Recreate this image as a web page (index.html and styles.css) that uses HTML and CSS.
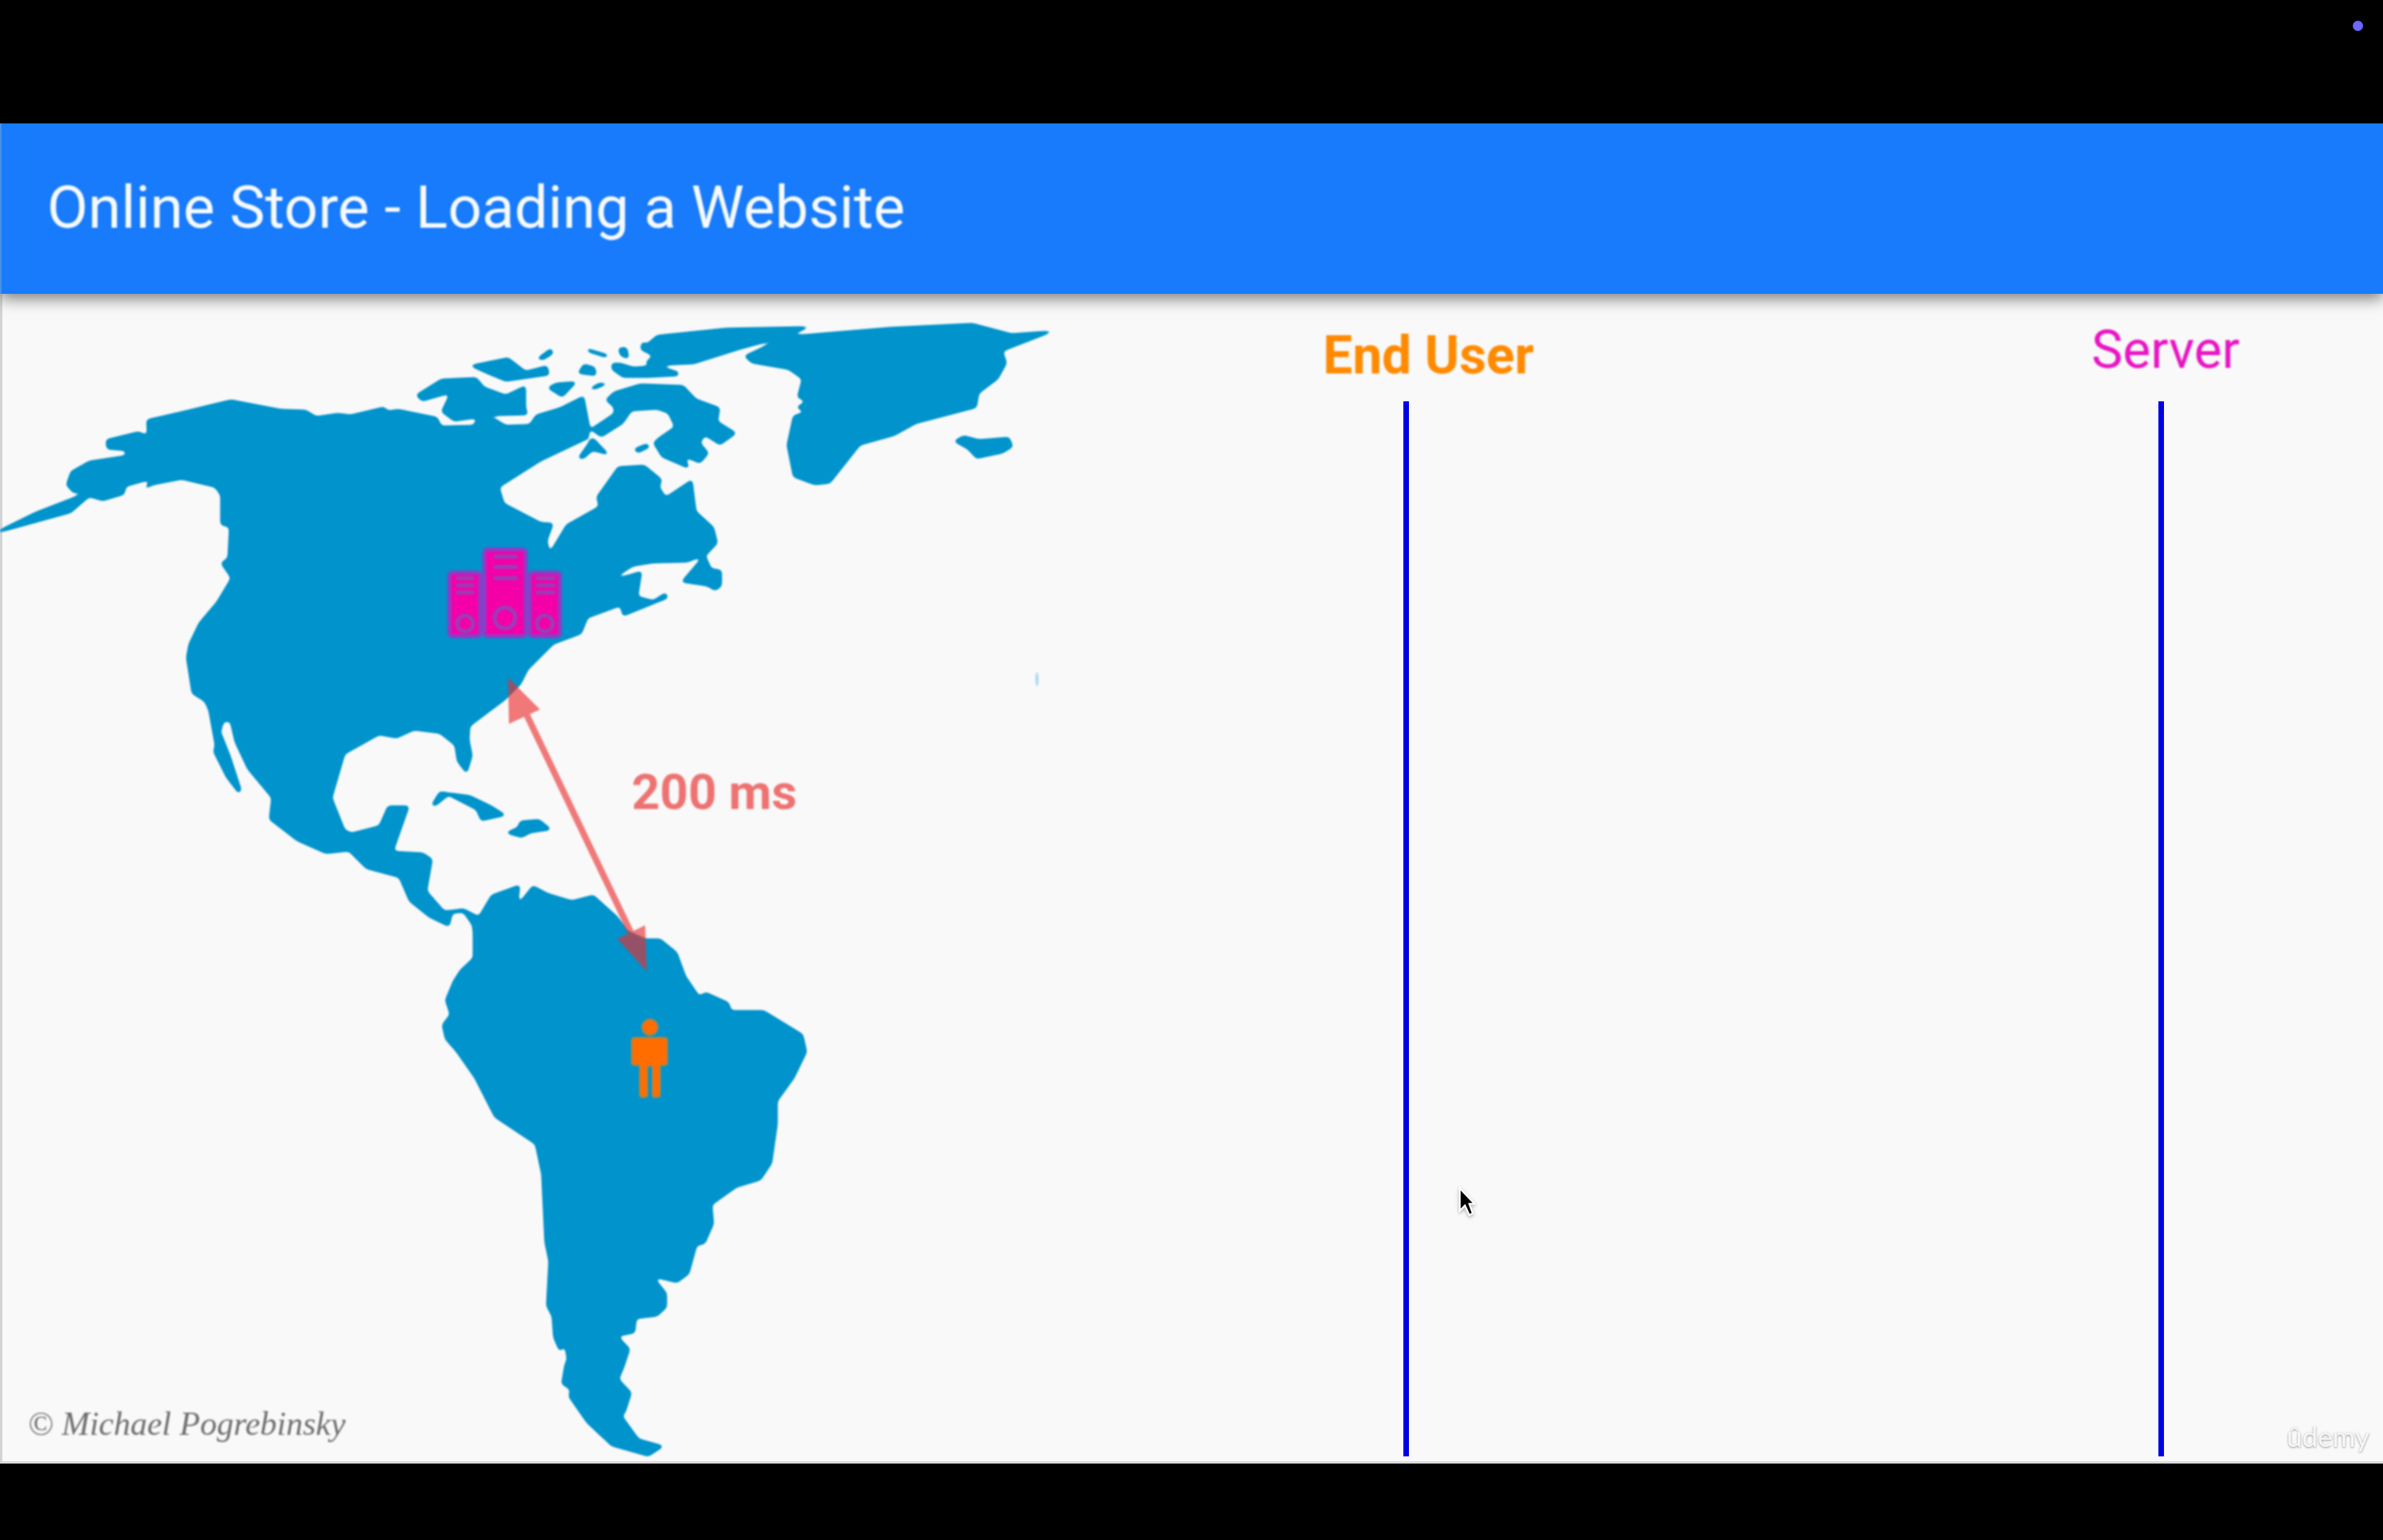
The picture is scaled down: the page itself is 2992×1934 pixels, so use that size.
FILE: index.html
```html
<!DOCTYPE html>
<html lang="en">
<head>
<meta charset="utf-8">
<title>Online Store - Loading a Website</title>
<link rel="stylesheet" href="styles.css">
</head>
<body>
<div class="video">
  <div class="topbar"><span class="dot"></span></div>
  <header class="header"><h1 class="title">Online Store - Loading a Website</h1></header>
  <main class="slide">
    <div class="mapcol">
      <svg class="map" viewBox="0 370 1400 1465" xmlns="http://www.w3.org/2000/svg" aria-label="Map of the Americas">
        <defs>
          <filter id="soften" filterUnits="userSpaceOnUse" x="0" y="370" width="1400" height="1465" color-interpolation-filters="sRGB">
            <feGaussianBlur stdDeviation="2.4"/>
            <feComponentTransfer>
              <feFuncA type="linear" slope="7" intercept="-2.4"/>
            </feComponentTransfer>
          </filter>
        </defs>
        <g class="land" filter="url(#soften)">
          <path d="M-16 674L45 644 112 618 92 620 83 610 89 593 112 580 158 573 158 567 134 565 133 553 174 543 185 548 184 528 232 517 290 503 353 515 384 516 397 524 424 520 440 522 482 512 487 517 500 515 549 525 554 536 595 535 598 528 622 527 635 535 665 534 673 522 703 513 733 498 741 540 738 552 679 580 627 613 633 633 679 657 695 658 687 680 690 695 711 660 752 637 749 625 776 587 809 585 831 603 828 613 836 625 869 603 874 643 896 663 901 683 888 697 863 707 820 708 795 712 766 730 806 718 801 750 820 755 836 745 839 752 782 775 779 762 738 777 730 797 695 810 663 842 654 860 634 880 590 913 589 930 593 950 586 973 574 957 571 937 552 922 520 918 498 928 476 924 433 948 417 1003 433 1043 441 1047 476 1038 487 1013 514 1013 494 1070 531 1072 543 1080 536 1120 558 1145 582 1142 601 1152 617 1125 653 1112 650 1137 669 1113 688 1123 718 1132 745 1125 775 1152 788 1170 810 1180 829 1180 850 1197 861 1227 878 1252 886 1247 915 1260 918 1270 959 1270 1008 1300 1013 1322 997 1355 976 1384 976 1413 969 1462 955 1483 925 1492 894 1514 896 1538 885 1563 875 1565 865 1601 850 1612 821 1605 837 1625 837 1643 825 1654 799 1657 797 1675 776 1679 791 1695 783 1719 777 1733 793 1750 785 1775 781 1779 802 1808 834 1817 814 1830 768 1817 737 1788 714 1755 716 1746 705 1739 709 1715 712 1708 709 1690 703 1699 695 1681 693 1654 686 1641 689 1585 684 1561 680 1476 672 1438 621 1404 596 1355 573 1322 559 1306 555 1288 565 1275 559 1257 569 1233 578 1219 594 1204 594 1172 593 1163 582 1147 568 1148 564 1165 539 1153 514 1133 501 1103 460 1092 438 1070 409 1073 373 1057 338 1030 341 1003 311 967 295 933 289 907 281 907 277 920 289 950 303 993 300 998 284 977 268 945 270 937 262 893 257 882 241 872 234 827 237 810 250 783 272 757 290 727 277 708 286 702 288 663 277 660 277 623 270 613 228 603 192 610 179 617 190 603 158 612 156 622 129 630 112 625 89 645Z"/>
          <path d="M522 497L554 477 598 475 608 487 635 497 660 485 660 513 663 522 622 523 570 530 554 518 565 495 530 505Z"/>
          <path d="M589 460L638 450 660 467 687 460 690 472 635 480 611 470Z"/>
          <path d="M673 452L692 438 695 445 682 453Z"/>
          <path d="M736 438L766 447 760 450 738 443Z"/>
          <path d="M776 438L787 437 790 452 779 448Z"/>
          <path d="M725 470L733 458 747 462 749 473Z"/>
          <path d="M687 488L698 482 725 480 706 500Z"/>
          <path d="M738 490L752 482 766 482 747 490Z"/>
          <path d="M806 430L812 433 825 422 912 413 1020 411 982 425 928 440 890 452 871 458 825 460 809 457 820 448 804 440Z"/>
          <path d="M768 457L779 457 795 462 825 460 852 468 852 473 814 475 782 475 768 465Z"/>
          <path d="M760 503L771 493 804 483 858 485 874 502 904 513 901 530 925 545 904 560 885 548 879 557 890 570 879 583 860 575 866 590 831 575 820 557 828 550 847 537 839 520 825 515 793 517 782 533 755 550 741 540 771 520 771 513Z"/>
          <path d="M795 565L812 558 817 562 801 570Z"/>
          <path d="M725 577L744 550 766 573 744 567 733 577Z"/>
          <path d="M934 448L988 423 1118 412 1221 407 1270 420 1326 416 1259 442 1264 457 1253 477 1229 495 1226 513 1150 533 1123 548 1080 560 1042 608 1023 610 996 600 988 560 996 523 1012 518 999 513 1012 505 1001 500 1007 477 990 465 944 457Z"/>
          <path d="M1197 555L1210 548 1229 553 1267 550 1272 562 1259 570 1226 577 1215 565Z"/>
          <path d="M855 732L885 697 893 715 906 717 906 737 898 743 888 737Z"/>
          <path d="M541 1013L552 995 590 1000 617 1013 636 1025 604 1032 598 1018 563 1000 547 1013Z"/>
          <path d="M634 1047L650 1040 653 1032 677 1030 693 1043 666 1047 655 1053Z"/>
        </g>
        <ellipse class="speck" cx="1302" cy="854" rx="2" ry="9"/>
        <g class="server">
          <rect x="564" y="720" width="39" height="80" rx="4"/>
          <rect x="608" y="691" width="52" height="109" rx="4"/>
          <rect x="665" y="720" width="38" height="80" rx="4"/>
          <path class="server-line" d="M622 700H648M622 713H648M622 727H648M575 727H593M575 736H593M575 745H593M675 727H695M675 736H695M675 745H695"/>
          <circle class="server-line" cx="634" cy="777" r="13"/>
          <circle class="server-line" cx="584" cy="784" r="10"/>
          <circle class="server-line" cx="684" cy="784" r="10"/>
        </g>
        <g class="person" transform="translate(0 2)">
          <circle cx="816" cy="1289" r="10"/>
          <path d="M797 1302H834Q838 1302 838 1306V1333Q838 1337 834 1337H829V1373Q829 1377 825 1377H822Q819 1377 819 1373V1338H813V1373Q813 1377 810 1377H807Q803 1377 803 1373V1337H797Q793 1337 793 1333V1306Q793 1302 797 1302Z"/>
        </g>
        <g class="arrow">
          <path class="arrow-shaft" d="M660 896L792 1172"/>
          <path class="arrow-head" d="M638 852L678 892 639 910Z"/>
          <path class="arrow-head" d="M812 1221L775 1180 810 1163Z"/>
        </g>
      </svg>
      <span class="latency">200 ms</span>
      <span class="credit">© Michael Pogrebinsky</span>
    </div>
    <section class="lanes">
      <div class="lane lane-user">
        <h2 class="lane-label label-user">End User</h2>
        <div class="lane-line"></div>
      </div>
      <div class="lane lane-server">
        <h2 class="lane-label label-server">Server</h2>
        <div class="lane-line"></div>
      </div>
    </section>
    <svg class="cursor" viewBox="0 0 20 34" xmlns="http://www.w3.org/2000/svg" aria-hidden="true">
      <path d="M2 2V28L8 22 13 33 17 31 13 20H19Z"/>
    </svg>
    <span class="watermark">ûdemy</span>
  </main>
</div>
</body>
</html>
```
FILE: styles.css
```css
* { box-sizing: border-box; }
html, body { margin: 0; height: 100%; background: #000; overflow: hidden; }
.video { display: flex; flex-direction: column; height: 1934px; font-family: Roboto, "Liberation Sans", sans-serif; }
.topbar { position: relative; flex: 0 0 155px; background: #000; }
.dot { position: absolute; left: 2954px; top: 26px; width: 13px; height: 13px; border-radius: 50%; background: #6a68ff; }
.header { position: relative; z-index: 2; flex: 0 0 214px; display: flex; align-items: center; padding-left: 57px; background: #177bfb; box-shadow: 0 6px 18px rgba(0, 0, 0, .5); border-left: 2px solid #4a90e8; }
.title { margin: 0 0 4px; color: #f6f9ff; font-size: 75px; font-weight: 400; line-height: 1; filter: blur(.8px); white-space: nowrap; }
.slide { position: relative; flex: 0 0 1469px; display: flex; background: #f9f9f9; border-left: 3px solid #d4d4d4; border-bottom: 3px solid #dcdcdc; }
.mapcol { position: relative; flex: 0 0 1397px; margin-left: -3px; }
.map { display: block; width: 1400px; height: 1465px; filter: blur(.9px); }
.land { fill: #0093cc; }
.speck { fill: #a8dcef; }
.server rect { fill: #f400a8; stroke: #8a3ec8; stroke-width: 5; }
.server-line { fill: none; stroke: #9a3db8; stroke-width: 5; stroke-linecap: round; }
.person { fill: #ff6d00; stroke: #8f8a60; stroke-width: 2; }
.arrow { opacity: .635; }
.arrow-shaft { stroke: #eb2e2e; stroke-width: 8; fill: none; }
.arrow-head { fill: #eb2e2e; }
.latency { position: absolute; left: 793px; top: 591px; color: #ee7272; font-size: 62px; font-weight: 700; line-height: 70px; filter: blur(.8px); white-space: nowrap; }
.credit { position: absolute; left: 35px; top: 1394px; color: #6f6f6f; font-family: "Liberation Serif", serif; font-style: italic; font-size: 42px; line-height: 50px; filter: blur(.9px); white-space: nowrap; }
.lanes { display: flex; flex: 1; padding-left: 261px; }
.lane { display: flex; flex-direction: column; height: 1460px; }
.lane-user { flex: 0 0 965px; }
.lane-server { flex: 0 0 auto; }
.lane-label { margin: 0; line-height: 64px; white-space: nowrap; filter: blur(.8px); }
.label-user { padding-top: 46px; height: 135px; color: #ff8a00; font-size: 66px; font-weight: 700; }
.label-server { padding-top: 39px; height: 135px; color: #e815c4; font-size: 66px; font-weight: 400; }
.lane-line { flex: 1; width: 7px; background: #0000e6; filter: blur(.5px); }
.lane-user .lane-line { margin-left: 101px; }
.lane-server .lane-line { margin-left: 84px; }
.cursor { position: absolute; left: 1827px; top: 1121px; width: 23px; height: 37px; filter: drop-shadow(0 2px 2px rgba(0, 0, 0, .3)) blur(.5px); }
.cursor path { fill: #000; stroke: #fff; stroke-width: 2; }
.watermark { position: absolute; right: 17px; bottom: 9px; color: #f6f6f6; font-family: Lato, sans-serif; font-size: 35px; line-height: 46px; text-shadow: 0 1px 3px rgba(0, 0, 0, .4); filter: blur(.5px); }
```
